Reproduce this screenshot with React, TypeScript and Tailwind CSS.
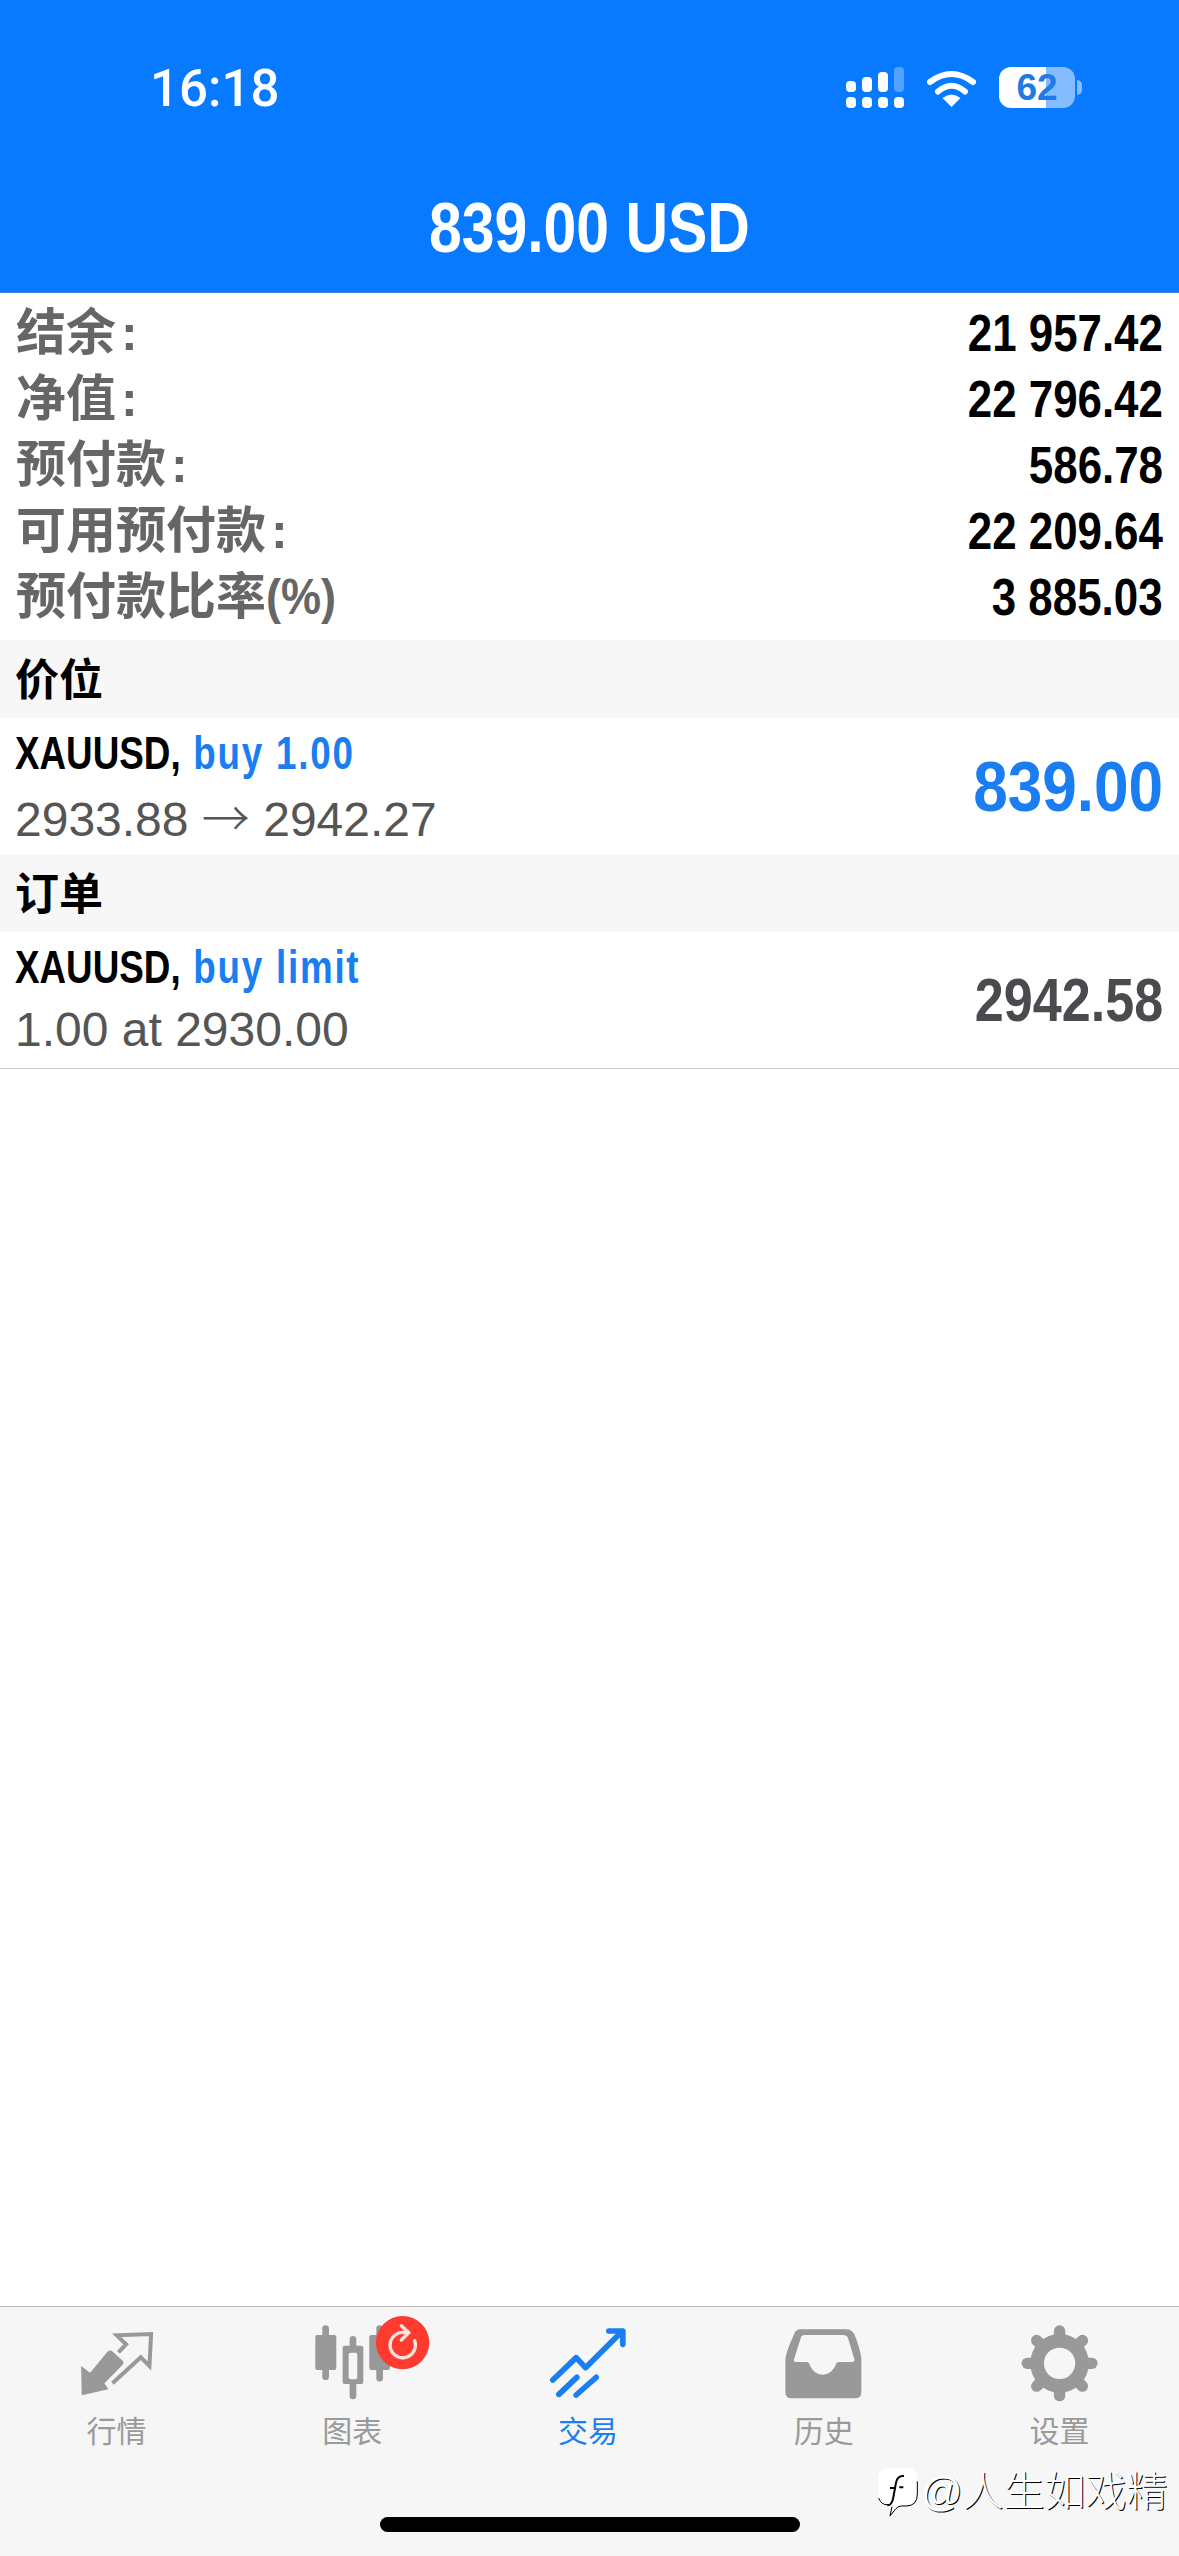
import React from "react";

const rows: [React.ReactNode, string][] = [
  ["结余", "21 957.42"],
  ["净值", "22 796.42"],
  ["预付款", "586.78"],
  ["可用预付款", "22 209.64"],
];

function Colon() {
  return <span className="font-bold ml-[5px]">:</span>;
}

function SummaryRow({ label, value }: { label: React.ReactNode; value: string }) {
  return (
    <div className="flex h-[66px] items-center justify-between pl-[16px] pr-[16px]">
      <span className="text-[50px] leading-none font-semibold text-[#666666] whitespace-nowrap">{label}</span>
      <span className="text-[51px] leading-none font-bold text-black origin-right scale-x-[.86] whitespace-nowrap">{value}</span>
    </div>
  );
}

function SectionHeader({ title }: { title: string }) {
  return (
    <div className="flex h-[78px] items-center bg-[#f7f7f7] pl-[15px] pt-[4px] text-[44px] leading-none font-bold text-black">{title}</div>
  );
}

function TradeRow({
  action,
  detail,
  value,
  valueClass,
}: {
  action: string;
  detail: React.ReactNode;
  value: string;
  valueClass: string;
}) {
  return (
    <div className="flex h-[136px] items-center justify-between pl-[15px] pr-[16px]">
      <div className="flex flex-col pb-[2px]">
        <div className="h-[61px] text-[46px] leading-[61px] font-bold text-black origin-left scale-x-[.8] whitespace-nowrap">
          XAUUSD, <span className="ml-[3px] tracking-[2.2px] text-[#1a7ef0]">{action}</span>
        </div>
        <div className="h-[63px] text-[48px] leading-[63px] text-[#555555] whitespace-nowrap">{detail}</div>
      </div>
      <span className={valueClass}>{value}</span>
    </div>
  );
}

const GRAY = "#999999";
const BLUE = "#1a7ef0";
const BG = "#f6f6f6";

function QuotesIcon() {
  return (
    <svg width="130" height="100" viewBox="-51.3 -30 390 300">
      <path d="M33 138 L60 158 L112 95 Q120 88 128 95 L158 122 Q163 128 157 135 L103 190 L115 208 L35 226 Z" fill={GRAY} />
      <path d="M145 97 L168 73 L140 46 L243 42 L238 138 L212 112 L127 190" fill="none" stroke={GRAY} strokeWidth="12" />
    </svg>
  );
}

function ChartIcon() {
  return (
    <svg width="130" height="100" viewBox="-48.9 0 390 300" className="overflow-visible">
      <line x1="61" y1="56" x2="61" y2="200" stroke={GRAY} strokeWidth="20" strokeLinecap="round" />
      <rect x="30" y="75" width="63" height="105" rx="6" fill={GRAY} />
      <line x1="143" y1="88" x2="143" y2="258" stroke={GRAY} strokeWidth="20" strokeLinecap="round" />
      <rect x="112" y="107" width="62" height="115" rx="6" fill={GRAY} />
      <rect x="130" y="128" width="26" height="80" rx="6" fill={BG} />
      <line x1="223" y1="56" x2="223" y2="205" stroke={GRAY} strokeWidth="20" strokeLinecap="round" />
      <rect x="192" y="75" width="62" height="105" rx="6" fill={GRAY} />
      <circle cx="292" cy="98" r="80" fill="#ff3b30" />
      <path d="M300 68 A38 38 0 1 0 328 92" fill="none" stroke="#fde4dc" strokeWidth="10" strokeLinecap="round" />
      <path d="M288 47 L311 68 L288 90" fill="none" stroke="#fde4dc" strokeWidth="10" strokeLinecap="round" strokeLinejoin="round" />
    </svg>
  );
}

function TradeIcon() {
  return (
    <svg width="130" height="100" viewBox="-46.5 -15 390 300">
      <g fill="none" stroke={BLUE} strokeWidth="17" strokeLinecap="round" strokeLinejoin="round">
        <path d="M40 195 L110 128 L138 158 L245 52" />
        <path d="M208 48 L250 48 L250 88" />
        <path d="M58 238 L112 187" />
        <path d="M110 240 L170 187" />
      </g>
    </svg>
  );
}

function HistoryIcon() {
  return (
    <svg width="130" height="100" viewBox="-44.1 -30 390 300">
      <path
        fillRule="evenodd"
        fill={GRAY}
        d="M75 28 H215 Q232 28 240 45 Q256 85 260 115 V215 Q260 235 240 235 H50 Q32 235 32 215 V115 Q38 85 55 50 Q62 28 75 28 Z M90 45 Q80 45 78 55 L58 118 Q56 126 64 126 H96 Q102 126 104 132 A42 46 0 0 0 184 132 Q186 126 192 126 H232 Q241 126 239 118 L220 55 Q216 45 205 45 Z"
      />
    </svg>
  );
}

function SettingsIcon() {
  const angles = [0, 45, 90, 135, 180, 225, 270, 315];
  return (
    <svg width="130" height="100" viewBox="-41.7 -30 390 300">
      <circle cx="149" cy="130" r="88" fill={GRAY} />
      {angles.map((a) => (
        <line
          key={a}
          x1="149"
          y1="60"
          x2="149"
          y2="33"
          stroke={GRAY}
          strokeWidth="34"
          strokeLinecap="round"
          transform={`rotate(${a} 149 130)`}
        />
      ))}
      <circle cx="149" cy="130" r="47" fill={BG} />
    </svg>
  );
}

const tabs = [
  { label: "行情", icon: <QuotesIcon />, active: false },
  { label: "图表", icon: <ChartIcon />, active: false },
  { label: "交易", icon: <TradeIcon />, active: true },
  { label: "历史", icon: <HistoryIcon />, active: false },
  { label: "设置", icon: <SettingsIcon />, active: false },
];

function Signal() {
  const cols = [
    { x: 0, y: 14, o: 1 },
    { x: 16, y: 10, o: 1 },
    { x: 32, y: 5, o: 1 },
    { x: 48, y: 0, o: 0.3 },
  ];
  return (
    <svg width="58" height="41" viewBox="0 0 58 41">
      {cols.map((c) => (
        <g key={c.x}>
          <rect x={c.x} y={c.y} width="10" height={25 - c.y} rx="4" fill="#fff" opacity={c.o} />
          <rect x={c.x} y="30" width="10" height="11" rx="4" fill="#fff" />
        </g>
      ))}
    </svg>
  );
}

function Wifi() {
  return (
    <svg width="49" height="38" viewBox="0 0 49 38">
      <path d="M3 13 Q24.5 -3 46 13" fill="none" stroke="#fff" strokeWidth="6" strokeLinecap="round" />
      <path d="M11 22.5 Q24.5 11 38 22.5" fill="none" stroke="#fff" strokeWidth="6" strokeLinecap="round" />
      <path d="M15.5 29 Q24.5 22 33.5 29 L24.5 38 Z" fill="#fff" />
    </svg>
  );
}

function WatermarkLogo() {
  return (
    <svg width="40" height="48" viewBox="0 0 120 144">
      <path d="M34 0 H86 Q118 0 118 34 V78 Q118 112 84 112 H70 Q60 112 52 122 L36 142 L42 112 H34 Q0 112 0 78 V34 Q0 0 34 0 Z" fill="#fff" />
      <path d="M118 40 V78 Q118 114 84 114 H70 Q60 114 52 124 L36 144 L42 116" fill="none" stroke="#000" strokeWidth="3" />
      <path d="M2 90 Q10 112 30 110" fill="none" stroke="#000" strokeWidth="3" />
      <path d="M28 112 Q42 112 46 88 L54 44 Q58 22 78 24 M36 60 H50 M64 58 H76" fill="none" stroke="#000" strokeWidth="6" />
    </svg>
  );
}

function Arrow() {
  return <span className="[font-family:'Noto_Sans_CJK_SC',sans-serif] font-light">→</span>;
}

export default function App() {
  return (
    <div className="relative flex h-[2556px] w-[1179px] flex-col overflow-hidden bg-white [font-family:'Liberation_Sans','Noto_Sans_CJK_SC',sans-serif]">
      <header className="flex h-[293px] flex-col border-b border-[#3f86dc] bg-[#087aff] text-white">
        <div className="mt-[67px] flex h-[41px] items-center justify-between pl-[150px] pr-[97px]">
          <span className="pt-[2px] text-[51px] leading-none font-medium [font-family:Roboto,sans-serif]">16:18</span>
          <div className="flex items-center">
            <Signal />
            <div className="ml-[23px]">
              <Wifi />
            </div>
            <div className="ml-[23px] flex h-[41px] w-[76px] items-center justify-center rounded-[12px] bg-[linear-gradient(90deg,#ffffff_62%,#ffffff80_62%)] text-[37px] leading-none font-bold text-[#1f7ae8]">
              62
            </div>
            <div className="ml-[2px] h-[15px] w-[5px] rounded-r-full bg-white/50" />
          </div>
        </div>
        <div className="mt-[84px] flex justify-center">
          <span className="text-[71px] leading-[71px] font-bold scale-x-[.83] whitespace-nowrap">839.00 USD</span>
        </div>
      </header>

      <main className="flex-1">
        <section className="pt-[7px] pb-[10px]">
          {rows.map(([label, value]) => (
            <SummaryRow
              key={value}
              value={value}
              label={
                <>
                  {label}
                  <Colon />
                </>
              }
            />
          ))}
          <SummaryRow
            value="3 885.03"
            label={
              <>
                预付款比率
                <span className="inline-block origin-left scale-x-[.9] font-bold">(%)</span>
              </>
            }
          />
        </section>
        <SectionHeader title="价位" />
        <TradeRow
          action="buy 1.00"
          detail={
            <>
              2933.88 <Arrow /> 2942.27
            </>
          }
          value="839.00"
          valueClass="text-[71px] leading-none font-bold text-[#1a7ef0] origin-right scale-x-[.875]"
        />
        <SectionHeader title="订单" />
        <div className="border-b border-[#cccccc]">
          <TradeRow
            action="buy limit"
            detail="1.00 at 2930.00"
            value="2942.58"
            valueClass="text-[62px] leading-none font-bold text-[#4a4a4f] origin-right scale-x-[.84]"
          />
        </div>
      </main>

      <nav className="flex h-[250px] flex-col border-t border-[#b8b8b8] bg-[#f6f6f6]">
        <div className="grid grid-cols-5 pt-[3px]">
          {tabs.map((t) => (
            <div key={t.label} className="flex flex-col items-center">
              <div className="h-[100px]">{t.icon}</div>
              <span className={`mt-[4px] mr-[3px] text-[30px] leading-[36px] ${t.active ? "text-[#1a7ef0]" : "text-[#9a9a9a]"}`}>{t.label}</span>
            </div>
          ))}
        </div>
        <div className="mx-auto mt-[67px] h-[15px] w-[420px] rounded-full bg-black" />
      </nav>

      <div className="absolute left-[878px] top-[2468px] flex items-center text-[41px] leading-none font-light text-white [text-shadow:1px_1px_0_#000]">
        <WatermarkLogo />
        <span className="ml-[3px] whitespace-nowrap">@人生如戏精</span>
      </div>
    </div>
  );
}
